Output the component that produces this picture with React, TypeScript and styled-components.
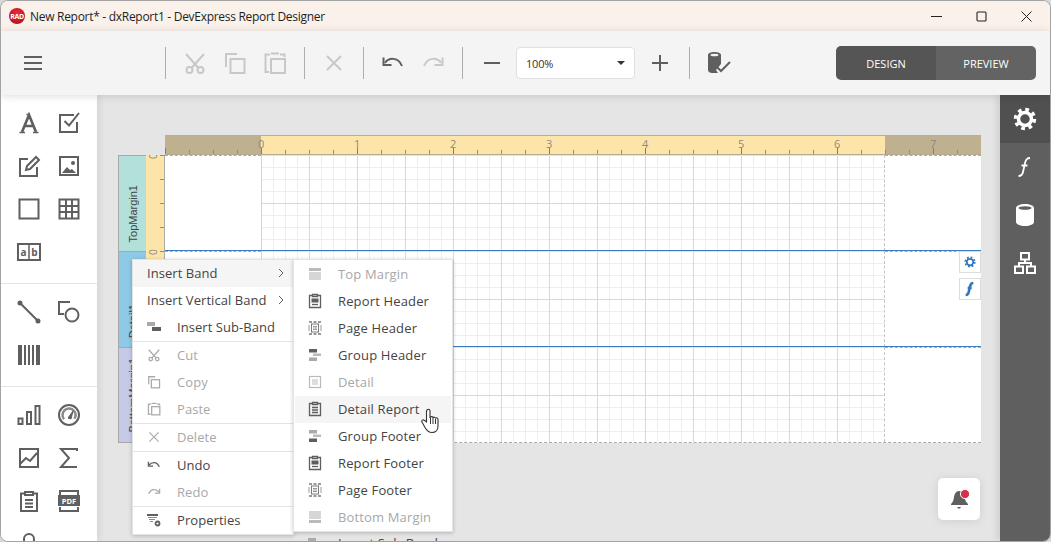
import React from 'react';
import styled, { createGlobalStyle } from 'styled-components';

const GlobalStyle = createGlobalStyle`
    html, body {
        margin: 0;
        padding: 0;
        background: #d8d8d8;
        overflow: hidden;
    }
    * {
        box-sizing: border-box;
    }
`;

const icon = (children: React.ReactNode, size = 24, color = '#5f5f5f', box = 24) => (
    <svg width={size} height={size} viewBox={`0 0 ${box} ${box}`} fill="none" stroke={color} strokeWidth="2">
        {children}
    </svg>
);

const Hamburger = () => icon(<path d="M3 6h18M3 12h18M3 18h18" />);
const Scissors = () => icon(<>
    <circle cx="6.5" cy="19" r="3" />
    <circle cx="17.5" cy="19" r="3" />
    <path d="M3 3l12.5 14M21 3L8.5 17" />
</>, 24, '#c8c8c8');
const Copy = () => icon(<>
    <path d="M14 3H3v13" />
    <rect x="7.5" y="8" width="14" height="14" />
</>, 24, '#c8c8c8');
const Paste = () => icon(<>
    <path d="M7 3.500H2.500V21H6M17 3.500h4.500V6M8 2.500h8" />
    <rect x="8" y="8" width="14" height="14" />
</>, 24, '#c8c8c8');
const Cross = () => icon(<path d="M5 5l14 14M19 5L5 19" />, 24, '#c8c8c8');
const Undo = ({ color = '#5f5f5f' }) => icon(<>
    <path d="M4 12c3-5 13-7 17 3" />
    <path d="M2.500 6.500v7.500h8" fill="none" />
</>, 24, color);
const Redo = ({ color = '#c8c8c8' }) => icon(<>
    <path d="M20 12c-3-5-13-7-17 3" />
    <path d="M21.500 6.500v7.500h-8" />
</>, 24, color);
const Minus = () => icon(<path d="M4 12h16" />);
const Plus = () => icon(<path d="M4 12h16M12 4v16" />);
const DbCheck = () => (
    <svg width="26" height="26" viewBox="0 0 26 26">
        <path d="M2 5c0-2 3-3 6.500-3S15 3 15 5v9l-5 6 2 3H6c-2 0-4-1-4-3z" fill="#5f5f5f" />
        <ellipse cx="8.500" cy="5" rx="4" ry="1.300" fill="#f4f4f4" />
        <path d="M11 17l4 4 9-9" fill="none" stroke="#5f5f5f" strokeWidth="2" />
    </svg>
);

const TextTool = () => (
    <svg width="24" height="24" viewBox="0 0 24 24" fill="none" stroke="#5f5f5f">
        <path d="M5 21L12 4l7 17M7.500 15h9" strokeWidth="2.700" />
        <path d="M2.500 21.500h5.500M16 21.500h5.500M9.500 3.500h3" strokeWidth="1.500" />
    </svg>
);
const CheckTool = () => icon(<>
    <path d="M20 11v10H3V4h14" />
    <path d="M7.500 10l4.500 4.500L22 2" />
</>);
const EditTool = () => icon(<>
    <path d="M11 5H3v17h17v-9" />
    <path d="M9 16l1-4L19 3l3 3-9 9z" />
</>);
const ImageTool = () => (
    <svg width="24" height="24" viewBox="0 0 24 24">
        <rect x="3" y="3" width="18" height="18" fill="none" stroke="#5f5f5f" strokeWidth="2" />
        <path d="M5 19l5-6 3 3 2-1 4 4z" fill="#5f5f5f" />
        <circle cx="16" cy="9" r="2" fill="#5f5f5f" />
    </svg>
);
const RectTool = () => icon(<rect x="2.500" y="2.500" width="19" height="19" />);
const TableTool = () => icon(<>
    <rect x="2.500" y="2.500" width="19" height="19" />
    <path d="M2.500 9h19M2.500 15h19M9 2.500v19M15 2.500v19" />
</>);
const LabelTool = () => (
    <svg width="24" height="18" viewBox="0 0 24 18">
        <rect x="1" y="1" width="22" height="16" fill="none" stroke="#5f5f5f" strokeWidth="2" />
        <path d="M12 1v16" stroke="#5f5f5f" strokeWidth="1.500" />
        <text x="6.500" y="13" fontFamily="'Open Sans', sans-serif" fontSize="10" fontWeight="700" textAnchor="middle" fill="#5f5f5f">a</text>
        <text x="17.500" y="13" fontFamily="'Open Sans', sans-serif" fontSize="10" fontWeight="700" textAnchor="middle" fill="#5f5f5f">b</text>
    </svg>
);
const LineTool = () => icon(<>
    <path d="M3 3l18 18" />
    <circle cx="3" cy="3" r="1.500" fill="#5f5f5f" />
    <circle cx="21" cy="21" r="1.500" fill="#5f5f5f" />
</>);
const ShapeTool = () => icon(<>
    <path d="M13 2H2v12h5" />
    <circle cx="15" cy="15" r="6.500" />
</>);
const BarcodeTool = () => (
    <svg width="24" height="22" viewBox="0 0 24 22" fill="#5f5f5f">
        <rect x="1" y="1" width="4" height="20" />
        <rect x="7" y="1" width="2" height="20" />
        <rect x="11" y="1" width="2" height="20" />
        <rect x="15" y="1" width="2" height="20" />
        <rect x="19" y="1" width="4" height="20" />
    </svg>
);
const ChartTool = () => icon(<>
    <rect x="1.500" y="15.500" width="4" height="5.500" />
    <rect x="10" y="9" width="4" height="12" />
    <rect x="18.500" y="3" width="4" height="18" />
</>);
const GaugeTool = () => (
    <svg width="24" height="24" viewBox="0 0 24 24" fill="none" stroke="#5f5f5f">
        <circle cx="12" cy="12" r="10" strokeWidth="2" />
        <circle cx="12" cy="12" r="6.500" strokeWidth="2.500" strokeDasharray="28 13" transform="rotate(140 12 12)" stroke="#8a8a8a" />
        <path d="M11 15l5-7-2 8z" fill="#5f5f5f" />
    </svg>
);
const SparkTool = () => icon(<>
    <rect x="3" y="3" width="18" height="18" />
    <path d="M3 18l6-6 4 3 7-8" />
</>);
const SumTool = () => icon(<path d="M20 5V3H4l8 9-8 9h16" />);
const ReportTool = () => icon(<>
    <path d="M8 4.500H4V22h16V4.500h-4" />
    <path d="M8 3h8v3H8zM8 11h8M8 14.500h8M8 18h8" />
</>);
const PdfTool = () => (
    <svg width="24" height="24" viewBox="0 0 24 24">
        <path d="M3 6V2h18v4M3 18v4h18v-4" fill="none" stroke="#5f5f5f" strokeWidth="2" />
        <rect x="1" y="6" width="22" height="11" fill="#5f5f5f" />
        <text x="12" y="14.500" fontFamily="'Open Sans', sans-serif" fontSize="7.500" fontWeight="700" textAnchor="middle" fill="#fff">PDF</text>
    </svg>
);
const LoopTool = () => icon(<path d="M12 22C8 16 7 10 7 7a5 5 0 0 1 10 0c0 3-1 9-5 15z" />);

const Gear = ({ size = 24, color = '#fff' }) => (
    <svg width={size} height={size} viewBox="0 0 24 24" fill="none" stroke={color}>
        <circle cx="12" cy="12" r="6.500" strokeWidth="3.500" />
        <circle cx="12" cy="12" r="9.500" strokeWidth="3.400" strokeDasharray="3.700 3.760" />
    </svg>
);
const Formula = ({ color = '#fff', width = 1.800 }) => (
    <svg width="24" height="24" viewBox="0 0 24 24" fill="none" stroke={color} strokeWidth={width}>
        <path d="M17 3c-3 0-4 1-5 5l-2 9c-.6 3-2 4-4.500 4M8.500 10.500h6" />
    </svg>
);
const Cylinder = () => (
    <svg width="22" height="24" viewBox="0 0 22 24">
        <path d="M2 5c0-2 4-4 9-4s9 2 9 4v14c0 2-4 4-9 4s-9-2-9-4z" fill="#fff" />
        <ellipse cx="11" cy="5" rx="6.500" ry="1.800" fill="#5f5f5f" />
    </svg>
);
const Hierarchy = () => icon(<>
    <rect x="8" y="2" width="8" height="6.500" />
    <rect x="2" y="15.500" width="8" height="6.500" />
    <rect x="14" y="15.500" width="8" height="6.500" />
    <path d="M12 8.500V12M6 15.500V12h12v3.500" />
</>, 24, '#fff');

const BandIcon = ({ kind, color }: { kind: string; color: string }) => {
    if (kind === 'solid') {
        return (
            <svg width="14" height="14" viewBox="0 0 14 14" fill={color}>
                <rect x="1" y="1" width="12" height="3" />
                <rect x="1" y="5" width="12" height="8" opacity="0.6" />
            </svg>
        );
    }
    if (kind === 'solidBottom') {
        return (
            <svg width="14" height="14" viewBox="0 0 14 14" fill={color}>
                <rect x="1" y="1" width="12" height="8" opacity="0.6" />
                <rect x="1" y="10" width="12" height="3" />
            </svg>
        );
    }
    if (kind === 'report') {
        return (
            <svg width="14" height="16" viewBox="0 0 14 16" fill="none" stroke={color} strokeWidth="1.300">
                <path d="M4 2.500H1.500v12h11v-12H10" />
                <path d="M4.500 1.500h5v2h-5z" />
                <rect x="3.500" y="5.500" width="7" height="4" fill={color} stroke="none" />
                <path d="M4 11.500h6" />
            </svg>
        );
    }
    if (kind === 'clip') {
        return (
            <svg width="14" height="16" viewBox="0 0 14 16" fill="none" stroke={color} strokeWidth="1.300">
                <path d="M4 2.500H1.500v12h11v-12H10" />
                <path d="M4.500 1.500h5v2h-5zM4 6.500h6M4 9h6M4 11.500h6" />
            </svg>
        );
    }
    if (kind === 'page') {
        return (
            <svg width="14" height="14" viewBox="0 0 14 14" fill="none" stroke="#9a9a9a" strokeWidth="1">
                <path d="M1 1h12M1 13h12" strokeWidth="2" strokeDasharray="3 1.500" />
                <rect x="3.500" y="3" width="7" height="8" stroke="#7a7a7a" />
                <path d="M5 5.500h4M5 7h4M5 8.500h4M1 4v6M13 4v6" />
            </svg>
        );
    }
    if (kind === 'groupHeader') {
        return (
            <svg width="14" height="14" viewBox="0 0 14 14">
                <rect x="1" y="1" width="8" height="3.500" fill={color} />
                <rect x="5" y="5.500" width="8" height="2.500" fill="#bbb" />
                <rect x="1" y="9.500" width="8" height="3.500" fill="#aaa" />
            </svg>
        );
    }
    if (kind === 'groupFooter') {
        return (
            <svg width="14" height="14" viewBox="0 0 14 14">
                <rect x="1" y="1" width="8" height="3.500" fill="#aaa" />
                <rect x="5" y="5.500" width="8" height="2.500" fill="#bbb" />
                <rect x="1" y="9.500" width="8" height="3.500" fill={color} />
            </svg>
        );
    }
    return (
        <svg width="14" height="14" viewBox="0 0 14 14" fill="none" stroke={color} strokeWidth="1.200">
            <rect x="1.500" y="1.500" width="11" height="11" />
            <path d="M4 5h6M4 7h6M4 9h6" />
        </svg>
    );
};

const SubBandIcon = () => (
    <svg width="14" height="12" viewBox="0 0 14 12">
        <rect x="0" y="1" width="8" height="4" fill="#aaa" />
        <rect x="5" y="6" width="9" height="4" fill="#5f5f5f" />
    </svg>
);
const PropertiesIcon = () => (
    <svg width="14" height="14" viewBox="0 0 14 14" fill="#5f5f5f">
        <rect x="0" y="1" width="11" height="2" />
        <path d="M1 4.500h9M2 6.500h6M3 8.500h3" stroke="#8a8a8a" strokeWidth="1" />
        <circle cx="10.500" cy="10.500" r="2" fill="none" stroke="#5f5f5f" strokeWidth="1.800" />
    </svg>
);
const SmallScissors = () => (
    <svg width="14" height="14" viewBox="0 0 24 24" fill="none" stroke="#aaa" strokeWidth="2.200">
        <circle cx="6.500" cy="19" r="3" />
        <circle cx="17.500" cy="19" r="3" />
        <path d="M3 3l12.500 14M21 3L8.500 17" />
    </svg>
);
const SmallCopy = () => (
    <svg width="14" height="14" viewBox="0 0 24 24" fill="none" stroke="#aaa" strokeWidth="2.200">
        <path d="M14 3H3v13" />
        <rect x="7.500" y="8" width="14" height="14" />
    </svg>
);
const SmallPaste = () => (
    <svg width="14" height="14" viewBox="0 0 24 24" fill="none" stroke="#aaa" strokeWidth="2.200">
        <path d="M7 3.500H2.500V21H6M17 3.500h4.500V6M8 2.500h8" />
        <rect x="8" y="8" width="14" height="14" />
    </svg>
);
const SmallCross = () => (
    <svg width="14" height="14" viewBox="0 0 24 24" fill="none" stroke="#aaa" strokeWidth="2">
        <path d="M4 4l16 16M20 4L4 20" />
    </svg>
);
const SmallUndo = ({ color }: { color: string }) => (
    <svg width="14" height="14" viewBox="0 0 24 24" fill="none" stroke={color} strokeWidth="2.400">
        <path d="M4 12c3-5 13-7 17 3M2.500 6.500v7.500h8" />
    </svg>
);
const SmallRedo = ({ color }: { color: string }) => (
    <svg width="14" height="14" viewBox="0 0 24 24" fill="none" stroke={color} strokeWidth="2.400">
        <path d="M20 12c-3-5-13-7-17 3M21.500 6.500v7.500h-8" />
    </svg>
);
const Pointer = () => (
    <svg width="20" height="26" viewBox="0 0 20 26">
        <path
            d="M6 2c1-1 2.500-1 3 .5V10l.5-1c1-.7 2-.4 2.500.5.8-.7 2-.4 2.500.6 1-.5 2.300 0 2.500 1.200V18c0 4-2.500 6.500-6 6.500-3.500 0-5-1.500-7-5L1 14c-.8-1.500 1-2.800 2.300-1.700L5.500 14V3z"
            fill="#fff"
            stroke="#333"
            strokeWidth="1.100"
        />
        <path d="M9.500 10v6M12 10v6M14.500 11v5" stroke="#333" strokeWidth="1" />
    </svg>
);
const Bell = () => (
    <svg width="22" height="22" viewBox="-2 -1 22 22">
        <path d="M9 2c-3 0-4.500 3-5 6-.4 3-1 5-3 7v1h17v-1c-2-2-3-4-3.500-7C14 5 12.500 2 9 2z" fill="#5f5f5f" />
        <path d="M7 18h4l-1 1.500H8z" fill="#5f5f5f" />
        <circle cx="15" cy="5" r="4.600" fill="#d9304a" stroke="#fff" strokeWidth="1" />
    </svg>
);

const rulerNumbers = [0, 1, 2, 3, 4, 5, 6, 7];

const mainMenu = [
    [
        { label: 'Insert Band', arrow: true, active: true },
        { label: 'Insert Vertical Band', arrow: true },
        { label: 'Insert Sub-Band', icon: <SubBandIcon /> },
    ],
    [
        { label: 'Cut', icon: <SmallScissors />, disabled: true },
        { label: 'Copy', icon: <SmallCopy />, disabled: true },
        { label: 'Paste', icon: <SmallPaste />, disabled: true },
    ],
    [
        { label: 'Delete', icon: <SmallCross />, disabled: true },
    ],
    [
        { label: 'Undo', icon: <SmallUndo color="#5f5f5f" /> },
        { label: 'Redo', icon: <SmallRedo color="#aaa" />, disabled: true },
    ],
    [
        { label: 'Properties', icon: <PropertiesIcon /> },
    ],
];

const bandMenu = [
    { label: 'Top Margin', kind: 'solid', disabled: true },
    { label: 'Report Header', kind: 'report' },
    { label: 'Page Header', kind: 'page' },
    { label: 'Group Header', kind: 'groupHeader' },
    { label: 'Detail', kind: 'detail', disabled: true },
    { label: 'Detail Report', kind: 'clip', active: true },
    { label: 'Group Footer', kind: 'groupFooter' },
    { label: 'Report Footer', kind: 'report' },
    { label: 'Page Footer', kind: 'page' },
    { label: 'Bottom Margin', kind: 'solidBottom', disabled: true },
];

export default function App() {
    return (
        <Window>
            <GlobalStyle />
            <TitleBar>
                <Logo>RAD</Logo>
                <TitleText>New Report* - dxReport1 - DevExpress Report Designer</TitleText>
                <WindowControls>
                    <WindowButton>
                        <svg width="11" height="11" viewBox="0 0 11 11"><path d="M0 5.500h11" stroke="#222" /></svg>
                    </WindowButton>
                    <WindowButton>
                        <svg width="11" height="11" viewBox="0 0 11 11"><rect x="1" y="1" width="9" height="9" rx="1" fill="none" stroke="#222" strokeWidth="1.100" /></svg>
                    </WindowButton>
                    <WindowButton>
                        <svg width="11" height="11" viewBox="0 0 11 11"><path d="M.5.500l10 10M10.500.500l-10 10" stroke="#222" /></svg>
                    </WindowButton>
                </WindowControls>
            </TitleBar>
            <Toolbar>
                <MenuSlot><Hamburger /></MenuSlot>
                <ToolSeparator />
                <ToolButton><Scissors /></ToolButton>
                <ToolButton><Copy /></ToolButton>
                <ToolButton><Paste /></ToolButton>
                <ToolSeparator />
                <ToolButton><Cross /></ToolButton>
                <ToolSeparator />
                <ToolButton><Undo /></ToolButton>
                <ToolButton><Redo /></ToolButton>
                <ToolSeparator />
                <ToolButton><Minus /></ToolButton>
                <ZoomBox>
                    100%
                    <ZoomCaret />
                </ZoomBox>
                <ToolButton><Plus /></ToolButton>
                <ToolSeparator />
                <ToolButton><DbCheck /></ToolButton>
                <ModeSwitch>
                    <ModeButton $active>DESIGN</ModeButton>
                    <ModeButton>PREVIEW</ModeButton>
                </ModeSwitch>
            </Toolbar>
            <Body>
                <ToolPanel>
                    <ToolSection>
                        <ToolCell><TextTool /></ToolCell>
                        <ToolCell><CheckTool /></ToolCell>
                        <ToolCell><EditTool /></ToolCell>
                        <ToolCell><ImageTool /></ToolCell>
                        <ToolCell><RectTool /></ToolCell>
                        <ToolCell><TableTool /></ToolCell>
                        <ToolCell><LabelTool /></ToolCell>
                    </ToolSection>
                    <ToolSection>
                        <ToolCell><LineTool /></ToolCell>
                        <ToolCell><ShapeTool /></ToolCell>
                        <ToolCell><BarcodeTool /></ToolCell>
                    </ToolSection>
                    <ToolSection>
                        <ToolCell><ChartTool /></ToolCell>
                        <ToolCell><GaugeTool /></ToolCell>
                        <ToolCell><SparkTool /></ToolCell>
                        <ToolCell><SumTool /></ToolCell>
                        <ToolCell><ReportTool /></ToolCell>
                        <ToolCell><PdfTool /></ToolCell>
                        <ToolCell><LoopTool /></ToolCell>
                    </ToolSection>
                </ToolPanel>
                <Canvas>
                    <Surface>
                        <TopRuler>
                            {rulerNumbers.map((n) => (
                                <RulerNumber key={n}>{n}</RulerNumber>
                            ))}
                        </TopRuler>
                        <Band>
                            <BandLabel $color="#b2e0da"><BandName>TopMargin1</BandName></BandLabel>
                            <SideRuler $clip><SideNumber>0</SideNumber></SideRuler>
                            <BandBody>
                                <BandMargin />
                                <BandGrid />
                                <BandMargin />
                            </BandBody>
                        </Band>
                        <Band>
                            <BandLabel $color="#8ecae6"><BandName>Detail1</BandName></BandLabel>
                            <SideRuler><SideNumber>0</SideNumber></SideRuler>
                            <BandBody $selected>
                                <BandMargin />
                                <BandGrid />
                                <BandMargin />
                                <BandActions>
                                    <BandAction><Gear size={12} color="#2f78bd" /></BandAction>
                                    <BandAction><Formula color="#2f78bd" width={4} /></BandAction>
                                </BandActions>
                            </BandBody>
                        </Band>
                        <Band>
                            <BandLabel $color="#c5cae9" $last><BandName>BottomMargin1</BandName></BandLabel>
                            <SideRuler><SideNumber>0</SideNumber></SideRuler>
                            <BandBody $selected $last>
                                <BandMargin />
                                <BandGrid />
                                <BandMargin />
                            </BandBody>
                        </Band>
                    </Surface>
                    <MainMenu>
                        {mainMenu.map((group) => (
                            <MenuGroup key={group[0].label}>
                                {group.map((item) => (
                                    <MainMenuItem key={item.label} $active={item.active} $disabled={item.disabled}>
                                        {item.icon && <MainMenuIcon>{item.icon}</MainMenuIcon>}
                                        {item.label}
                                        {item.arrow && (
                                            <Arrow viewBox="0 0 6 10" width="6" height="10">
                                                <path d="M1 1l4 4-4 4" fill="none" stroke="#5f5f5f" />
                                            </Arrow>
                                        )}
                                    </MainMenuItem>
                                ))}
                            </MenuGroup>
                        ))}
                    </MainMenu>
                    <BandMenu>
                        {bandMenu.map((item) => (
                            <BandMenuItem key={item.label} $active={item.active} $disabled={item.disabled}>
                                <BandMenuIcon>
                                    <BandIcon kind={item.kind} color={item.disabled ? '#bbb' : '#5f5f5f'} />
                                </BandMenuIcon>
                                {item.label}
                            </BandMenuItem>
                        ))}
                    </BandMenu>
                    <HiddenRow>
                        <BandMenuIcon><SubBandIcon /></BandMenuIcon>
                        Insert Sub-Band
                    </HiddenRow>
                    <Cursor><Pointer /></Cursor>
                    <BellButton><Bell /></BellButton>
                </Canvas>
                <SidePanel>
                    <SideTab $active><Gear /></SideTab>
                    <SideTab><Formula /></SideTab>
                    <SideTab><Cylinder /></SideTab>
                    <SideTab><Hierarchy /></SideTab>
                </SidePanel>
            </Body>
        </Window>
    );
}

const uiFont = `'Open Sans', 'Noto Sans', sans-serif`;

const Window = styled.div`
    width: 1051px;
    height: 542px;
    display: flex;
    flex-direction: column;
    overflow: hidden;
    border: 1px solid #a3a3a3;
    border-radius: 8px;
    font-family: ${uiFont};
    color: #444;
    background: #f4f4f4;
`;

const TitleBar = styled.div`
    height: 30px;
    flex: none;
    display: flex;
    align-items: center;
    padding-left: 8px;
    background: #f9f1ea;
`;

const Logo = styled.div`
    width: 16px;
    height: 16px;
    display: flex;
    align-items: center;
    justify-content: center;
    border-radius: 50%;
    background: radial-gradient(circle at 50% 35%, #ee2a3a, #a50d18);
    color: #fff;
    font-size: 7px;
    font-weight: 700;
    letter-spacing: -0.4px;
`;

const TitleText = styled.div`
    margin-left: 5px;
    font-size: 12px;
    letter-spacing: -0.29px;
    color: #1f1f1f;
`;

const WindowControls = styled.div`
    margin-left: auto;
    padding-right: 1px;
    display: flex;
`;

const WindowButton = styled.div`
    width: 45px;
    height: 30px;
    display: flex;
    align-items: center;
    justify-content: center;
`;

const Toolbar = styled.div`
    height: 64px;
    flex: none;
    display: flex;
    align-items: center;
    position: relative;
    z-index: 2;
    padding-left: 12px;
    background: #f4f4f4;
    box-shadow: 0 1px 8px rgba(0, 0, 0, 0.14);
`;

const MenuSlot = styled.div`
    width: 40px;
    height: 32px;
    margin-right: 103px;
    display: flex;
    align-items: center;
    justify-content: center;
`;

const ToolSeparator = styled.div`
    width: 1px;
    height: 32px;
    margin: 0 9px;
    background: #aeaeae;
`;

const ToolButton = styled.div`
    width: 40px;
    height: 32px;
    display: flex;
    align-items: center;
    justify-content: center;
`;

const ZoomBox = styled.div`
    width: 119px;
    height: 32px;
    margin: 0 5px 0 4px;
    display: flex;
    align-items: center;
    justify-content: space-between;
    padding: 0 9px;
    border: 1px solid #e0e0e0;
    border-radius: 4px;
    background: #fff;
    font-size: 11px;
    letter-spacing: -0.2px;
    color: #333;
`;

const ZoomCaret = styled.span`
    width: 0;
    height: 0;
    border-left: 4px solid transparent;
    border-right: 4px solid transparent;
    border-top: 4px solid #333;
`;

const ModeSwitch = styled.div`
    margin-left: auto;
    margin-right: 14px;
    display: flex;
    height: 34px;
    border-radius: 5px;
    overflow: hidden;
`;

const ModeButton = styled.div<{ $active?: boolean }>`
    width: 100px;
    display: flex;
    align-items: center;
    justify-content: center;
    background: ${(props) => (props.$active ? '#555555' : '#636363')};
    color: #fff;
    font-size: 11px;
`;

const Body = styled.div`
    flex: 1 0 0;
    min-height: 0;
    display: flex;
`;

const ToolPanel = styled.div`
    width: 96px;
    flex: none;
    background: #fff;
    position: relative;
    z-index: 1;
    overflow: hidden;
    box-shadow: 2px 0 8px rgba(0, 0, 0, 0.08);
`;

const ToolSection = styled.div`
    display: grid;
    grid-template-columns: 40px 40px;
    grid-auto-rows: 43px;
    padding: 6.5px 8px 9.5px;
    border-bottom: 1px solid #e4e4e4;
    &:last-child {
        border-bottom: none;
    }
`;

const ToolCell = styled.div`
    display: flex;
    align-items: center;
    justify-content: center;
`;

const Canvas = styled.div`
    flex: 1 0 0;
    min-width: 0;
    position: relative;
    overflow: hidden;
    padding: 40px 0 0 21px;
    background: #e5e5e5;
`;

const Surface = styled.div`
    width: 863px;
    display: flex;
    flex-direction: column;
`;

const TopRuler = styled.div`
    height: 20px;
    margin-left: 47px;
    padding-left: 96px;
    display: flex;
    overflow: hidden;
    border-top: 1px solid #bcae8a;
    border-bottom: 1px solid #b5ab90;
    background:
        repeating-linear-gradient(90deg, #7d7d7d 0 1px, transparent 1px 96px) 0 100% / 100% 6px no-repeat,
        repeating-linear-gradient(90deg, #8d8d8d 0 1px, transparent 1px 24px) 0 100% / 100% 4px no-repeat,
        linear-gradient(90deg, #bfb18f 96px, #fde5aa 96px, #fde5aa 720px, #bfb18f 720px);
`;

const RulerNumber = styled.div`
    width: 96px;
    flex: none;
    text-indent: -3px;
    font-size: 11px;
    line-height: 16px;
    color: #8a8a8a;
`;

const Band = styled.div`
    height: 96px;
    display: flex;
`;

const BandLabel = styled.div<{ $color: string; $last?: boolean }>`
    width: 28px;
    flex: none;
    display: flex;
    align-items: flex-end;
    justify-content: center;
    padding: 0 0 9px 1px;
    overflow: hidden;
    border: 1px solid #a8a8a8;
    border-width: ${(props) => (props.$last ? '1px 0 1px 1px' : '1px 0 0 1px')};
    background: ${(props) => props.$color};
`;

const BandName = styled.div`
    writing-mode: vertical-rl;
    transform: rotate(180deg);
    white-space: nowrap;
    font-family: 'Liberation Sans', Arial, sans-serif;
    font-size: 11px;
    line-height: 14px;
    color: #444;
`;

const SideRuler = styled.div<{ $clip?: boolean }>`
    width: 19px;
    flex: none;
    overflow: ${(props) => (props.$clip ? 'hidden' : 'visible')};
    border-right: 1px solid #aaa;
    background:
        repeating-linear-gradient(180deg, #8d8d8d 0 1px, transparent 1px 24px) 100% 0 / 4px 100% no-repeat,
        #fde5aa;
`;

const SideNumber = styled.div`
    width: 10px;
    margin: -7px 0 0 2px;
    transform: rotate(-90deg);
    font-size: 10px;
    line-height: 12px;
    color: #8a8a8a;
`;

const BandBody = styled.div<{ $selected?: boolean; $last?: boolean }>`
    width: 816px;
    flex: none;
    display: flex;
    position: relative;
    background: #fff;
    ${(props) => props.$selected && 'box-shadow: 0 -1px 0 #3a7cbd;'}
    ${(props) => props.$last && 'border-bottom: 1px dashed #aaa;'}
`;

const BandMargin = styled.div`
    width: 96px;
    flex: none;
    border-top: 1px dashed #aaa;
`;

const BandGrid = styled.div`
    width: 624px;
    flex: none;
    border-top: 1px solid #e4e4e4;
    border-left: 1px solid #d4d4d4;
    border-right: 1px dashed #c4c4c4;
    background-color: #fff;
    background-image:
        linear-gradient(#d8d8d8 1px, transparent 1px),
        linear-gradient(90deg, #d8d8d8 1px, transparent 1px),
        linear-gradient(#eeeeee 1px, transparent 1px),
        linear-gradient(90deg, #eeeeee 1px, transparent 1px);
    background-size: 48px 48px, 48px 48px, 12px 12px, 12px 12px;
    background-position: 0 -1px, -1px 0, 0 -1px, -1px 0;
`;

const BandActions = styled.div`
    position: absolute;
    right: 0;
    top: 0;
    display: flex;
    flex-direction: column;
    gap: 5px;
`;

const BandAction = styled.div`
    width: 22px;
    height: 22px;
    display: flex;
    align-items: center;
    justify-content: center;
    border: 1px solid #ddd;
    background: #fff;
    svg {
        max-width: 16px;
        max-height: 16px;
    }
`;

const menuBox = `
    position: absolute;
    background: #fff;
    border: 1px solid #e4e4e4;
    box-shadow: 0 1px 4px rgba(0, 0, 0, 0.22);
`;

const MainMenu = styled.div`
    ${menuBox}
    left: 35px;
    top: 164px;
    width: 162px;
`;

const MenuGroup = styled.div`
    border-bottom: 1px solid #e4e4e4;
    &:last-child {
        border-bottom: none;
    }
`;

const menuText = (props: { $active?: boolean; $disabled?: boolean }) => `
    background: ${props.$active ? '#f5f5f5' : 'transparent'};
    color: ${props.$disabled ? '#a8a8a8' : '#444'};
`;

const MainMenuItem = styled.div<{ $active?: boolean; $disabled?: boolean }>`
    height: 27px;
    display: flex;
    align-items: center;
    padding: 0 0 2px 14px;
    font-size: 13px;
    letter-spacing: 0.06px;
    ${menuText}
`;

const MainMenuIcon = styled.span`
    width: 30px;
    flex: none;
    display: flex;
    align-items: center;
`;

const Arrow = styled.svg`
    margin-left: auto;
    margin-right: 9px;
`;

const BandMenu = styled.div`
    ${menuBox}
    left: 196px;
    top: 164px;
    width: 160px;
    padding: 1px 1px 0;
`;

const BandMenuItem = styled.div<{ $active?: boolean; $disabled?: boolean }>`
    height: 27px;
    display: flex;
    align-items: center;
    padding: 0 0 2px 13px;
    font-size: 13px;
    letter-spacing: 0.15px;
    ${menuText}
`;

const BandMenuIcon = styled.span`
    width: 30px;
    flex: none;
    display: flex;
    align-items: center;
`;

const HiddenRow = styled.div`
    position: absolute;
    left: 211px;
    top: 439px;
    display: flex;
    align-items: center;
    font-size: 13px;
    letter-spacing: 0.2px;
    color: #444;
`;

const Cursor = styled.div`
    position: absolute;
    left: 324px;
    top: 313px;
    line-height: 0;
`;

const BellButton = styled.div`
    position: absolute;
    left: 841px;
    top: 383px;
    width: 42px;
    height: 42px;
    display: flex;
    align-items: center;
    justify-content: center;
    border-radius: 5px;
    background: #fff;
    box-shadow: 0 1px 10px rgba(0, 0, 0, 0.1);
`;

const SidePanel = styled.div`
    width: 50px;
    flex: none;
    position: relative;
    z-index: 1;
    background: #5f5f5f;
    box-shadow: -2px 0 8px rgba(0, 0, 0, 0.12);
`;

const SideTab = styled.div<{ $active?: boolean }>`
    height: 48px;
    display: flex;
    align-items: center;
    justify-content: center;
    background: ${(props) => (props.$active ? '#505050' : 'transparent')};
`;
